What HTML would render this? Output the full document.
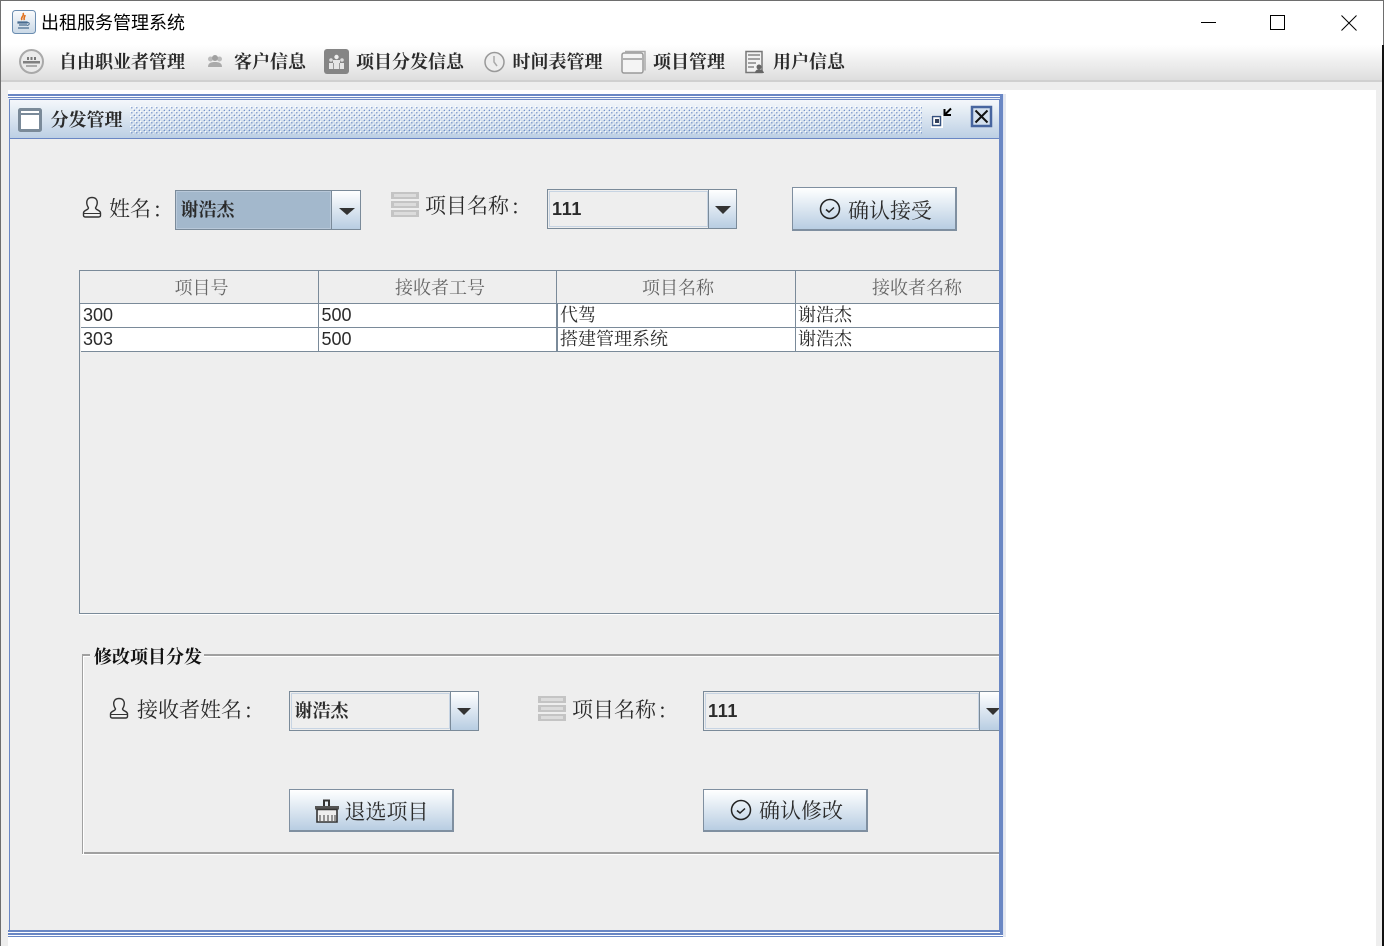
<!DOCTYPE html>
<html><head><meta charset="utf-8"><style>
html,body{margin:0;padding:0;background:#fff}
#r{position:relative;width:1384px;height:946px;overflow:hidden;background:#fff}
.a{position:absolute}
.t{position:absolute;white-space:nowrap;line-height:1;color:#2b2b2b;font-family:"Noto Serif CJK SC","Liberation Serif",serif;font-size:18px}
.t i{font-style:normal;margin-left:3px}
.b{font-weight:700}
.s{font-family:"Liberation Sans",sans-serif}
.n{letter-spacing:.7px}
.btn{position:absolute;box-sizing:border-box;border:2px solid #7f8fa0;border-width:1px 2px 2px 1px;background:linear-gradient(#fff 0,#f4f8fb 15%,#b8cde2 100%)}
.cb{position:absolute;box-sizing:border-box;border:1px solid #7a8a99;background:#eee}
.ar{position:absolute;top:0;bottom:0;border-left:1px solid #7a8a99;background:linear-gradient(#fff 0,#b8cde2 100%)}
svg{position:absolute;overflow:visible}
</style></head><body><div id="r">
<div class="a" style="left:0;top:45px;width:1384px;height:35px;background:linear-gradient(#fff,#dedede)"></div>
<div class="a" style="left:0;top:80px;width:1384px;height:2px;background:#d0d0d0"></div>
<div class="a" style="left:0;top:82px;width:1384px;height:864px;background:#eee"></div>
<div class="a" style="left:8px;top:90px;width:1368px;height:856px;background:#fff"></div>
<div class="a" style="left:0;top:0;width:1384px;height:1px;background:#6e6e6e"></div>
<div class="a" style="left:0;top:0;width:1px;height:946px;background:#6e6e6e"></div>
<div class="a" style="left:1383px;top:0;width:1px;height:45px;background:#6e6e6e"></div>
<div class="a" style="left:1382px;top:45px;width:2px;height:901px;background:#111"></div>

<!-- title bar -->
<svg style="left:12px;top:10px" width="24" height="24" viewBox="0 0 24 24"><defs><linearGradient id="j" x1="0" y1="0" x2="0" y2="1"><stop offset="0" stop-color="#fbfcfd"/><stop offset="1" stop-color="#c9d8e6"/></linearGradient></defs><rect x=".5" y=".5" width="23" height="23" rx="3" fill="url(#j)" stroke="#6b8db0"/><path d="M11 3c2 3-3 4-1 7M13 5c0 2-2 3-.5 5" stroke="#e0701c" stroke-width="1.600" fill="none"/><path d="M6 12h9v1H6zM7 15h8M6 18h11" stroke="#4a6d90" stroke-width="1.200" fill="none"/><path d="M15 12.500c3-.5 3 2.500 0 3" stroke="#4a6d90" fill="none"/></svg>
<div class="t" style="left:41px;top:13px;color:#000;font-family:'Noto Sans CJK SC',sans-serif;font-size:18px">出租服务管理系统</div>
<div class="a" style="left:1201px;top:22px;width:15px;height:1px;background:#000"></div>
<div class="a" style="left:1270px;top:15px;width:15px;height:15px;box-sizing:border-box;border:1px solid #000"></div>
<svg style="left:1341px;top:15px" width="16" height="16"><path d="M.5.5l15 15M15.500.5l-15 15" stroke="#000" fill="none"/></svg>

<!-- menu -->
<svg style="left:19px;top:49px" width="25" height="25"><circle cx="12.500" cy="12.500" r="11.500" fill="#eaeaea" stroke="#a9a9a9" stroke-width="2"/><path d="M8 8h2v3H8zM11.500 8h2v3h-2zM15 8h2v3h-2z" fill="#777"/><rect x="4" y="12" width="17" height="2.500" fill="#808080"/><rect x="7" y="16" width="11" height="2" fill="#aaa"/></svg>
<div class="t b" style="left:59px;top:52px">自由职业者管理</div>
<svg style="left:207px;top:54px" width="16" height="15"><circle cx="3.500" cy="5" r="2.500" fill="#bbb"/><circle cx="12.500" cy="5" r="2.500" fill="#bbb"/><circle cx="8" cy="4" r="3" fill="#a0a0a0"/><path d="M1 13c0-4 3-5 7-5s7 1 7 5z" fill="#aaa"/></svg>
<div class="t b" style="left:234px;top:52px">客户信息</div>
<svg style="left:324px;top:49px" width="25" height="25"><rect width="25" height="25" rx="3" fill="#858585"/><circle cx="12.500" cy="8" r="2.200" fill="#eee"/><circle cx="7" cy="11" r="1.800" fill="#ddd"/><circle cx="18" cy="11" r="1.800" fill="#ddd"/><path d="M5 20v-6h4v-3h7v3h4v6z" fill="#e6e6e6"/><path d="M9.500 14v6M15.500 14v6" stroke="#999"/></svg>
<div class="t b" style="left:356px;top:52px">项目分发信息</div>
<svg style="left:484px;top:51px" width="21" height="22"><circle cx="10.500" cy="11" r="9.500" fill="#eee" stroke="#999" stroke-width="1.500"/><path d="M10 5v6l3 4" stroke="#aaa" stroke-width="1.500" fill="none"/></svg>
<div class="t b" style="left:512.500px;top:52px">时间表管理</div>
<svg style="left:621px;top:49px" width="25" height="25"><path d="M4 2.500h20v19" stroke="#aaa" stroke-width="1.500" fill="none"/><rect x="1" y="4" width="21" height="20" rx="2" fill="#f4f4f4" stroke="#999" stroke-width="1.500"/><path d="M2 10h19" stroke="#999" stroke-width="1.500"/></svg>
<div class="t b" style="left:653px;top:52px">项目管理</div>
<svg style="left:745px;top:50px" width="20" height="24"><rect x="1" y="1.500" width="16" height="21" fill="#f2f2f2" stroke="#777" stroke-width="1.500"/><path d="M3 5h12M3 9h12M3 13h8M3 17h6" stroke="#888" stroke-width="1.500"/><circle cx="14" cy="17" r="2.500" fill="#666"/><path d="M10 23c0-5 8-5 9 0z" fill="#666"/></svg>
<div class="t b" style="left:773px;top:52px">用户信息</div>

<!-- internal frame -->
<div class="a" style="left:1004px;top:94px;width:2px;height:843px;background:#e6e9f0"></div>
<div class="a" style="left:8px;top:94px;width:996px;height:843px;background:#6a87c4"></div>
<div class="a" style="left:8px;top:96px;width:992px;height:1px;background:#fff"></div>
<div class="a" style="left:8px;top:935px;width:996px;height:1px;background:#fff"></div>
<div class="a" style="left:1003px;top:94px;width:1px;height:843px;background:#dfe5f2"></div>
<div class="a" style="left:8px;top:98px;width:992px;height:1px;background:#eef2f8"></div>
<div class="a" style="left:8px;top:932px;width:992px;height:1px;background:#fff"></div>
<div class="a" style="left:8px;top:99px;width:2px;height:831px;background:#eee"></div>
<div class="a" style="left:10px;top:100px;width:989px;height:38px;background:linear-gradient(#f4f7fb,#e4ecf4 30%,#bccfe4)"></div>
<div class="a" style="left:9px;top:99px;width:1px;height:833px;background:#6a87c4"></div>
<div class="a" style="left:10px;top:138px;width:989px;height:1px;background:#6a87c4"></div>
<div class="a" style="left:10px;top:139px;width:989px;height:791px;background:#eee"></div>
<svg style="left:130px;top:106px" width="792" height="28"><defs><pattern id="d" width="5" height="5" patternUnits="userSpaceOnUse"><rect x="0" y="0" width="1.300" height="1.300" fill="#fff"/><rect x="2.500" y="2.500" width="1.300" height="1.300" fill="#fff"/><rect x="1.200" y="1.200" width="1.200" height="1.200" fill="#5f80c0"/><rect x="3.700" y="3.700" width="1.200" height="1.200" fill="#5f80c0"/></pattern></defs><rect width="792" height="28" fill="url(#d)"/></svg>
<svg style="left:18px;top:108px" width="24" height="24"><rect x="1.500" y="1.500" width="21" height="21" rx="1" fill="#fff" stroke="#7a8a99" stroke-width="3"/><path d="M3 6h18" stroke="#7a8a99" stroke-width="2"/></svg>
<div class="t b" style="left:50.500px;top:110px">分发管理</div>
<svg style="left:932px;top:106px" width="22" height="23"><rect x="-1" y="9" width="12" height="13" fill="#fff"/><rect x=".5" y="10.500" width="8" height="9" fill="#fff" stroke="#33507f" stroke-width="1.500"/><rect x="3" y="13" width="4" height="4" fill="#33405a"/><path d="M12.500 3v6h6.500M13 8.500l6-6" stroke="#000" stroke-width="2" fill="none"/></svg>
<svg style="left:971px;top:106px" width="21" height="22"><rect x="1" y="1" width="19" height="19" fill="#d4e0ee" stroke="#47659f" stroke-width="2.500"/><path d="M4.500 4.500l12 12M16.500 4.500l-12 12" stroke="#111" stroke-width="2"/></svg>

<!-- top form -->
<svg style="left:82px;top:196px" width="20" height="23"><path d="M6.500 12C3 6 5 1.500 10 1.500S17 6 13.500 12c0 2 5 2 5 5v2.500c0 1-1 1.500-2 1.500H3.500c-1 0-2-.5-2-1.500V17c0-3 5-3 5-5z" fill="#f2f2f2" stroke="#333" stroke-width="1.400"/><path d="M2 17.500h16" stroke="#333" stroke-width="1"/></svg>
<div class="t" style="left:109px;top:198px;font-size:21px">姓名<i>:</i></div>
<div class="cb" style="left:175px;top:190px;width:186px;height:40px;background:#a3b8cc"><div class="a" style="left:0;top:0;right:29px;bottom:0;border:1px solid #b8c8d9;box-sizing:border-box"></div><div class="ar" style="right:0;width:28px"></div></div>
<div class="a" style="left:339px;top:208px;width:0;height:0;border:8px solid transparent;border-top:7px solid #333;border-bottom:0"></div>
<div class="t b" style="left:180.500px;top:200px">谢浩杰</div>

<svg style="left:391px;top:192px" width="28" height="25"><path d="M0 0h28v7H0zM0 9h28v7H0zM0 18h28v7H0z" fill="#c4c4c4"/><path d="M3 2h22v3H3zM3 11h22v3H3zM3 20h22v3H3z" fill="#dcdcdc"/></svg>
<div class="t" style="left:425px;top:195px;font-size:21px">项目名称<i>:</i></div>
<div class="cb" style="left:547px;top:189px;width:190px;height:40px"><div class="a" style="left:1px;top:1px;right:28px;bottom:1px;border:1px solid #c7d4e3;box-sizing:border-box"></div><div class="ar" style="right:0;width:27px"></div></div>
<div class="a" style="left:715px;top:206px;width:0;height:0;border:8px solid transparent;border-top:8px solid #333;border-bottom:0"></div>
<div class="t b s n" style="left:552px;top:200px">111</div>

<div class="btn" style="left:792px;top:187px;width:165px;height:44px"></div>
<svg style="left:819px;top:198px" width="22" height="22"><circle cx="11" cy="11" r="9.500" fill="none" stroke="#222" stroke-width="1.500"/><path d="M7 11.500l3 2.500 5-4.500" stroke="#222" stroke-width="1.500" fill="none"/></svg>
<div class="t" style="left:848px;top:200px;font-size:21px">确认接受</div>

<!-- table -->
<div class="a" style="left:79px;top:270px;width:920px;height:344px;box-sizing:border-box;border:1px solid #7a8a99;border-width:1px 0 1px 1px"></div>
<div class="a" style="left:79px;top:614px;width:920px;height:1px;background:#fff"></div>
<div class="a" style="left:80px;top:271px;width:919px;height:32px;border-bottom:1px solid #7a8a99;background:#eee"></div>
<div class="a" style="left:81px;top:304px;width:918px;height:47px;background:#fff"></div>
<div class="a" style="left:81px;top:327px;width:918px;height:1px;background:#7a8a99"></div>
<div class="a" style="left:81px;top:351px;width:918px;height:1px;background:#7a8a99"></div>
<div class="a" style="left:318px;top:271px;width:1px;height:81px;background:#7a8a99"></div>
<div class="a" style="left:556px;top:271px;width:1px;height:33px;background:#7a8a99"></div>
<div class="a" style="left:556px;top:304px;width:2px;height:48px;background:#7a8a99"></div>
<div class="a" style="left:795px;top:271px;width:1px;height:81px;background:#7a8a99"></div>
<div class="t" style="left:174.500px;top:278px;color:#666">项目号</div>
<div class="t" style="left:395px;top:278px;color:#666">接收者工号</div>
<div class="t" style="left:642px;top:278px;color:#666">项目名称</div>
<div class="t" style="left:872px;top:278px;color:#666">接收者名称</div>
<div class="t s" style="left:83px;top:306px">300</div>
<div class="t s" style="left:321.500px;top:306px">500</div>
<div class="t" style="left:560px;top:305px">代驾</div>
<div class="t" style="left:798px;top:305px">谢浩杰</div>
<div class="t s" style="left:83px;top:330px">303</div>
<div class="t s" style="left:321.500px;top:330px">500</div>
<div class="t" style="left:560px;top:329px">搭建管理系统</div>
<div class="t" style="left:798px;top:329px">谢浩杰</div>

<!-- group -->
<div class="a" style="left:82px;top:654px;width:917px;height:200px;box-sizing:border-box;border:2px solid #a0a0a0;border-width:2px 0 2px 1px"></div>
<div class="a" style="left:84px;top:656px;width:915px;height:1px;background:#fff"></div>
<div class="a" style="left:83px;top:656px;width:1px;height:198px;background:#fff"></div>
<div class="a" style="left:82px;top:854px;width:917px;height:1px;background:#fff"></div>
<div class="a" style="left:90px;top:648px;width:114px;height:16px;background:#eee"></div>
<div class="t b" style="left:94px;top:647px;color:#111">修改项目分发</div>

<svg style="left:109px;top:697px" width="20" height="23"><path d="M6.500 12C3 6 5 1.500 10 1.500S17 6 13.500 12c0 2 5 2 5 5v2.500c0 1-1 1.500-2 1.500H3.500c-1 0-2-.5-2-1.500V17c0-3 5-3 5-5z" fill="#f2f2f2" stroke="#333" stroke-width="1.400"/><path d="M2 17.500h16" stroke="#333" stroke-width="1"/></svg>
<div class="t" style="left:137px;top:699px;font-size:21px">接收者姓名<i>:</i></div>
<div class="cb" style="left:289px;top:691px;width:190px;height:40px"><div class="a" style="left:1px;top:1px;right:28px;bottom:1px;border:1px solid #c7d4e3;box-sizing:border-box"></div><div class="ar" style="right:0;width:27px"></div></div>
<div class="a" style="left:457px;top:708px;width:0;height:0;border:7.500px solid transparent;border-top:7px solid #333;border-bottom:0"></div>
<div class="t b" style="left:294.500px;top:701px">谢浩杰</div>

<svg style="left:538px;top:696px" width="28" height="25"><path d="M0 0h28v7H0zM0 9h28v7H0zM0 18h28v7H0z" fill="#c4c4c4"/><path d="M3 2h22v3H3zM3 11h22v3H3zM3 20h22v3H3z" fill="#dcdcdc"/></svg>
<div class="t" style="left:572px;top:699px;font-size:21px">项目名称<i>:</i></div>
<div class="cb" style="left:703px;top:691px;width:296px;height:40px;border-right:0"><div class="a" style="left:1px;top:1px;right:20px;bottom:1px;border:1px solid #c7d4e3;box-sizing:border-box"></div><div class="ar" style="right:0;width:19px"></div></div>
<div class="a" style="left:986px;top:708px;width:13px;height:7px;overflow:hidden"><div style="width:0;height:0;border:7.500px solid transparent;border-top:7px solid #333;border-bottom:0"></div></div>
<div class="t b s n" style="left:708px;top:702px">111</div>

<div class="btn" style="left:289px;top:789px;width:165px;height:43px"></div>
<svg style="left:314px;top:798px" width="26" height="26"><path d="M10 8V2.500h5V8" fill="none" stroke="#333" stroke-width="2"/><rect x="1" y="8" width="24" height="3.500" fill="#555"/><path d="M3 11.500h20V24H3z" fill="#eee" stroke="#333" stroke-width="1.600"/><path d="M6 17v6M10 17v6M14 17v6M18 17v6M21 17v6" stroke="#777" stroke-width="1.500"/></svg>
<div class="t" style="left:344.500px;top:801px;font-size:21px">退选项目</div>
<div class="btn" style="left:703px;top:789px;width:165px;height:43px"></div>
<svg style="left:730px;top:799px" width="22" height="22"><circle cx="11" cy="11" r="9.500" fill="none" stroke="#222" stroke-width="1.500"/><path d="M7 11.500l3 2.500 5-4.500" stroke="#222" stroke-width="1.500" fill="none"/></svg>
<div class="t" style="left:759px;top:800px;font-size:21px">确认修改</div>
</div></body></html>
